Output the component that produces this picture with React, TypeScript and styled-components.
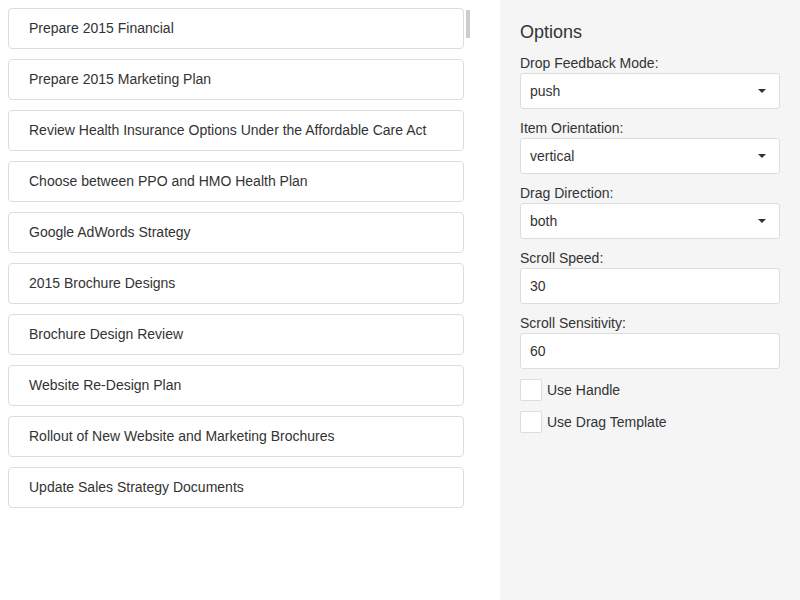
import styled, { createGlobalStyle } from "styled-components";

const GlobalStyle = createGlobalStyle`
    html, body {
        margin: 0;
        padding: 0;
        background: #ffffff;
        font-family: "Liberation Sans", Arial, sans-serif;
        color: #333333;
    }
    * {
        box-sizing: border-box;
    }
`;

const tasks = [
    "Prepare 2015 Financial",
    "Prepare 2015 Marketing Plan",
    "Review Health Insurance Options Under the Affordable Care Act",
    "Choose between PPO and HMO Health Plan",
    "Google AdWords Strategy",
    "2015 Brochure Designs",
    "Brochure Design Review",
    "Website Re-Design Plan",
    "Rollout of New Website and Marketing Brochures",
    "Update Sales Strategy Documents",
];

const PageLayout = styled.div`
    display: flex;
    width: 800px;
    height: 600px;
    overflow: hidden;
`;

const ListSection = styled.div`
    position: relative;
    width: 500px;
    padding: 8px 36px 8px 8px;
    display: flex;
    flex-direction: column;
    gap: 10px;
`;

const Scrollbar = styled.div`
    position: absolute;
    top: 10px;
    left: 466px;
    width: 4px;
    height: 28px;
    background-color: #cdcdcd;
`;

const TaskItem = styled.div`
    height: 41px;
    display: flex;
    align-items: center;
    padding: 0 20px 1px;
    border: 1px solid #dddddd;
    border-radius: 4px;
    background: #ffffff;
    font-size: 14px;
    line-height: 20px;
    color: #333333;
`;

const OptionsPanel = styled.div`
    flex: 1;
    background-color: #f5f5f5;
    padding: 21px 20px;
`;

const Title = styled.h3`
    margin: 0 0 10px;
    font-size: 18px;
    font-weight: normal;
    line-height: 22px;
    color: #333333;
`;

const Field = styled.div`
    margin-bottom: 9px;
`;

const Label = styled.label`
    display: block;
    font-size: 14px;
    line-height: 20px;
    color: #333333;
`;

const Box = styled.div`
    height: 36px;
    display: flex;
    align-items: center;
    justify-content: space-between;
    padding: 0 13px 0 9px;
    border: 1px solid #dddddd;
    border-radius: 3px;
    background: #ffffff;
    font-size: 14px;
    color: #333333;
`;

const Caret = styled.span`
    width: 0;
    height: 0;
    border-left: 4px solid transparent;
    border-right: 4px solid transparent;
    border-top: 4px solid #333333;
`;

const CheckList = styled.div`
    padding-top: 1px;
`;

const CheckRow = styled.div`
    display: flex;
    align-items: center;
    gap: 5px;
    height: 22px;
    margin-bottom: 10px;
    font-size: 14px;
    color: #333333;
`;

const CheckBox = styled.span`
    width: 22px;
    height: 22px;
    border: 1px solid #dddddd;
    border-radius: 2px;
    background: #ffffff;
`;

const SelectField = ({ label, value }: { label: string; value: string }) => (
    <Field>
        <Label>{label}</Label>
        <Box>
            <span>{value}</span>
            <Caret />
        </Box>
    </Field>
);

const InputField = ({ label, value }: { label: string; value: string }) => (
    <Field>
        <Label>{label}</Label>
        <Box>
            <span>{value}</span>
        </Box>
    </Field>
);

const App = () => {
    return (
        <PageLayout>
            <GlobalStyle />
            <ListSection>
                {tasks.map((t, i) => (
                    <TaskItem key={i}>{t}</TaskItem>
                ))}
                <Scrollbar />
            </ListSection>
            <OptionsPanel>
                <Title>Options</Title>
                <SelectField label="Drop Feedback Mode:" value="push" />
                <SelectField label="Item Orientation:" value="vertical" />
                <SelectField label="Drag Direction:" value="both" />
                <InputField label="Scroll Speed:" value="30" />
                <InputField label="Scroll Sensitivity:" value="60" />
                <CheckList>
                    <CheckRow>
                        <CheckBox />
                        Use Handle
                    </CheckRow>
                    <CheckRow>
                        <CheckBox />
                        Use Drag Template
                    </CheckRow>
                </CheckList>
            </OptionsPanel>
        </PageLayout>
    );
};

export default App;
